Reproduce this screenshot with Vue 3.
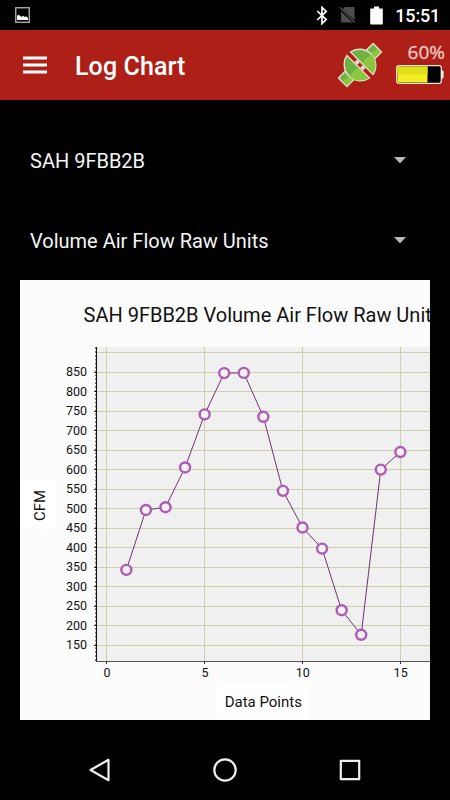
<script setup>
const dropdowns = ['SAH 9FBB2B', 'Volume Air Flow Raw Units']

const values = [343.5, 497, 504, 606, 742, 848, 848.5, 736, 546, 452, 398, 240, 177, 600.5, 645.5]

// chart scales
const xPos = (i) => 86.8 + i * 19.57
const yPos = (v) => 92.3 + (850 - v) * 0.39

const yTicks = Array.from({ length: 15 }, (_, i) => 850 - i * 50)
const xTicks = [0, 5, 10, 15]
const gridRows = [900, ...yTicks]

const points = values.map((v, i) => ({ x: xPos(i + 1), y: yPos(v) }))
const linePoints = points.map((p) => `${p.x},${p.y}`).join(' ')

// pixel-aligned positions for hairlines
const snap = (n) => Math.floor(n) + 0.5
</script>

<template>
  <div class="screen">
    <div class="status-bar">
      <svg class="status-picture" width="15" height="16" viewBox="0 0 15 16">
        <rect x="0.75" y="0.75" width="13.5" height="14.5" fill="none" stroke="#b5b5b5" stroke-width="1.3" />
        <path d="M2 13V8.7l1.8-1 1.6 1.6 1.3.4 1.5-1 1.2 1.2 1.6-.7 2 1.8v2z" fill="#fff" />
      </svg>
      <div class="status-right">
        <svg width="12" height="19" viewBox="0 0 12 19">
          <path d="M1.2 5l9 8.6L6 17.6V1.4l4.2 4L1.2 14" fill="none" stroke="#fff" stroke-width="1.7" />
        </svg>
        <svg class="status-sim" width="17" height="18" viewBox="0 0 17 18">
          <path d="M6 1h8.5q1 0 1 1v12.2L3.7 3.3zM2 5.3L13.6 16.5H3q-1 0-1-1z" fill="#4d4d4d" />
          <path d="M.7 1.2l15 15.3" stroke="#4d4d4d" stroke-width="1.3" />
        </svg>
        <svg class="status-battery" width="13" height="19" viewBox="0 0 13 19">
          <path d="M4 .5h5v2h3q.8 0 .8.8v14.4q0 .8-.8.8H1q-.8 0-.8-.8V3.3q0-.8.8-.8h3z" fill="#fff" />
        </svg>
        <span class="clock">15:51</span>
      </div>
    </div>

    <header class="app-bar">
      <svg class="menu-icon" width="24" height="18" viewBox="0 0 24 18">
        <path d="M0 2h24M0 9h24M0 16h24" stroke="#fff" stroke-width="2.8" />
      </svg>
      <h1 class="app-title">Log Chart</h1>
      <svg class="plug-icon" width="48" height="48" viewBox="-24 -24 48 48">
        <g transform="rotate(-45)" stroke="#eadfce" stroke-width="1.4">
          <rect x="-24.5" y="-6" width="49" height="12" fill="#6fb244" />
          <path d="M16 0h7.8v5.3h-7.8zM-16 0h-7.8v5.3h7.8z" fill="#8bc63f" stroke="none" />
          <path d="M-2.4-16A16.3 16.3 0 0 0-2.4 16z" fill="#6fb244" />
          <path d="M2.4-16A16.3 16.3 0 0 1 2.4 16z" fill="#6fb244" />
          <path d="M-3.1 0V15.2A15.6 15.6 0 0 1-15.6 0zM3.1 0V15.2A15.6 15.6 0 0 0 15.6 0z" fill="#8bc63f" stroke="none" />
          <path d="M0-17V17" stroke="#b02018" stroke-width="3.4" />
          <path d="M0-6v4M0 2v4" stroke="#f0e0d8" stroke-width="3.2" />
        </g>
      </svg>
      <div class="device-battery">
        <span class="percent">60%</span>
        <svg width="48" height="20" viewBox="0 0 48 20">
          <path d="M45 5.5h1.5q1 0 1 1v6q0 1-1 1H45z" fill="#fff" />
          <rect x=".7" y=".7" width="44.6" height="17.6" rx="2" fill="#000" stroke="#eee6dc" stroke-width="1.3" />
          <rect x="1.5" y="1.5" width="30" height="16" fill="#f5ec21" />
          <rect x="1.5" y="1.5" width="30" height="8" fill="#dfdf1b" />
        </svg>
      </div>
    </header>

    <main class="content">
      <div v-for="label in dropdowns" :key="label" class="dropdown">
        <span class="dropdown-label">{{ label }}</span>
        <svg width="12" height="7" viewBox="0 0 12 7">
          <path d="M0 0h12L6 6.6z" fill="#b9b9b9" />
        </svg>
      </div>

      <svg class="chart" width="410" height="440" viewBox="0 0 410 440">
        <rect width="410" height="440" fill="#fcfcfc" />
        <rect x="77" y="67" width="333" height="314" fill="#f0f0f0" />

        <g class="grid">
          <line v-for="v in gridRows" :key="v" x1="77" x2="410" :y1="snap(yPos(v))" :y2="snap(yPos(v))" />
          <line v-for="t in xTicks" :key="t" y1="67" y2="381" :x1="snap(xPos(t))" :x2="snap(xPos(t))" />
        </g>

        <line x1="75.5" y1="67" x2="75.5" y2="381" stroke="#777" stroke-dasharray="2 1.9" />
        <line x1="76.5" y1="67" x2="76.5" y2="382" stroke="#111" />
        <line x1="76" y1="381.5" x2="410" y2="381.5" stroke="#555" />
        <line v-for="v in yTicks" :key="v" class="tick" x1="74" x2="76" :y1="snap(yPos(v))" :y2="snap(yPos(v))" />
        <line v-for="t in xTicks" :key="t" class="tick" y1="381" y2="384" :x1="snap(xPos(t))" :x2="snap(xPos(t))" />

        <polyline class="series" :points="linePoints" />
        <circle v-for="(p, i) in points" :key="i" class="marker" :cx="p.x" :cy="p.y" r="5" />

        <text class="chart-title" x="63.5" y="41.5">SAH 9FBB2B Volume Air Flow Raw Units</text>
        <g class="tick-label">
          <text v-for="v in yTicks" :key="v" x="67" :y="yPos(v) + 4" text-anchor="end">{{ v }}</text>
          <text v-for="t in xTicks" :key="t" :x="xPos(t) + 0.3" y="397" text-anchor="middle">{{ t }}</text>
        </g>

        <rect x="2" y="199" width="35" height="50" fill="#fff" />
        <text class="axis-title" transform="translate(25.3 225.5) rotate(-90)">CFM</text>
        <rect x="197" y="403" width="92" height="36" fill="#fff" />
        <text class="axis-title" x="243.3" y="427">Data Points</text>
      </svg>
    </main>

    <nav class="nav-bar">
      <svg width="26" height="26" viewBox="0 0 26 26">
        <path d="M21.5 2.8v20.4L3.5 13z" />
      </svg>
      <svg width="26" height="26" viewBox="0 0 26 26">
        <circle cx="13" cy="13" r="10.7" />
      </svg>
      <svg width="26" height="26" viewBox="0 0 26 26">
        <rect x="3.8" y="3.8" width="18.4" height="18.4" />
      </svg>
    </nav>
  </div>
</template>

<style>
body {
  background: #000;
}
</style>

<style scoped>
.screen {
  width: 450px;
  height: 800px;
  display: flex;
  flex-direction: column;
  background: #000;
  color: #fff;
  font-family: Roboto, sans-serif;
  overflow: hidden;
}

.status-bar {
  height: 30px;
  display: flex;
  align-items: center;
  justify-content: space-between;
  padding: 0 10px 0 15px;
  box-sizing: border-box;
}

.status-right {
  display: flex;
  align-items: center;
}

.status-sim {
  margin-left: 11px;
}

.status-battery {
  margin-left: 14px;
}

.clock {
  margin-left: 12px;
  padding-top: 2px;
  font-size: 18px;
  font-weight: 500;
  line-height: 28px;
  letter-spacing: -0.2px;
}

.app-bar {
  height: 70px;
  display: flex;
  align-items: center;
  background: #ae1f18;
  padding: 0 5px 0 23px;
  box-sizing: border-box;
}

.app-title {
  margin: 3px auto 0 28px;
  font-size: 25px;
  font-weight: 500;
  line-height: 32px;
  letter-spacing: 0.1px;
}

.plug-icon {
  margin-right: 12px;
}

.device-battery {
  width: 49px;
  display: flex;
  flex-direction: column;
  align-items: flex-end;
  padding-bottom: 6px;
}

.device-battery svg {
  margin-right: 1px;
}

.percent {
  font-family: "Open Sans", sans-serif;
  font-size: 19px;
  line-height: 25px;
  color: #f0c9c4;
  -webkit-text-stroke: 0.3px #f0c9c4;
}

.content {
  padding: 20px 20px 0;
}

.dropdown {
  height: 80px;
  display: flex;
  align-items: center;
  justify-content: space-between;
  padding: 0 24px 0 10px;
  font-size: 20px;
  color: #f5f5f5;
}

.dropdown-label {
  padding-top: 2px;
}

.chart {
  display: block;
}

.chart text {
  fill: #111;
}

.grid line {
  stroke: #cfcfae;
  stroke-width: 1;
}

.tick {
  stroke: #333;
}

.series {
  fill: none;
  stroke: #6d3470;
  stroke-width: 1;
}

.marker {
  fill: #f4f0f4;
  stroke: #ad5bb3;
  stroke-width: 2.4;
}

.chart-title {
  font-size: 20px;
}

.tick-label {
  font-size: 12.5px;
}

.axis-title {
  font-size: 15px;
  text-anchor: middle;
}

.nav-bar {
  flex: 1;
  display: flex;
  align-items: center;
  justify-content: space-between;
  padding: 20px 87px 0;
}

.nav-bar svg {
  fill: none;
  stroke: #eee;
  stroke-width: 2.2;
  stroke-linejoin: round;
}
</style>
